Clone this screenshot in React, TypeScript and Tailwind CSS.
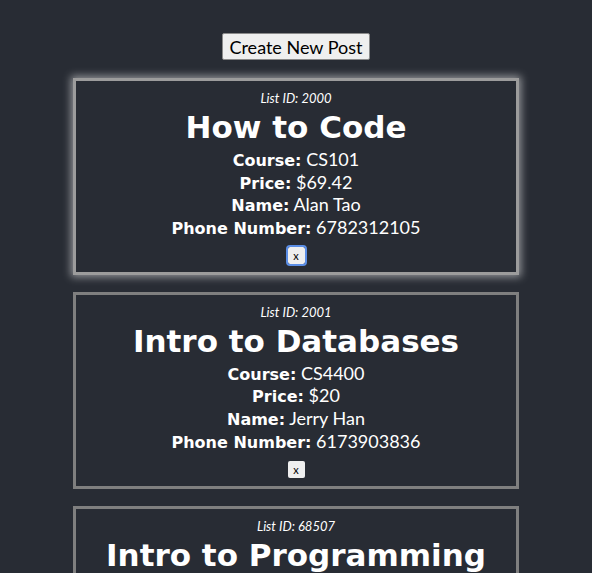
import React from "react";

type Post = { id: number; title: string; course: string; price: string; name: string; phone: string };

const posts: Post[] = [
  { id: 2000, title: "How to Code", course: "CS101", price: "$69.42", name: "Alan Tao", phone: "6782312105" },
  { id: 2001, title: "Intro to Databases", course: "CS4400", price: "$20", name: "Jerry Han", phone: "6173903836" },
  { id: 68507, title: "Intro to Programming", course: "CS1301", price: "$15", name: "Jane Doe", phone: "4045551234" },
];

const boldFont = "font-['DejaVu_Sans',sans-serif] font-bold";

function Field({ label, value }: { label: string; value: string }) {
  return (
    <div className="h-[22.7px] leading-[22.7px]">
      <span className={boldFont + " text-[16px] leading-none"}>{label}</span> {value}
    </div>
  );
}

function Card({ p, active }: { p: Post; active?: boolean }) {
  return (
    <div
      className={
        "w-[446px] mx-auto border-[3px] flex flex-col items-center pt-[9px] pb-[8px] " +
        (active
          ? "border-[#9c9c9c] shadow-[0_0_8px_2px_rgba(255,255,255,0.5)]"
          : "border-[#7f7f7f]")
      }
    >
      <div className="text-[13px] leading-[16px] italic">List ID: {p.id}</div>
      <div className={boldFont + " text-[31px] leading-[40px] mt-[1px]"}>{p.title}</div>
      <div className="text-[18px] leading-[22.7px] mt-[1px] flex flex-col items-center">
        <Field label="Course:" value={p.course} />
        <Field label="Price:" value={p.price} />
        <Field label="Name:" value={p.name} />
        <Field label="Phone Number:" value={p.phone} />
      </div>
      <button
        className={
          "mt-[8px] w-[17px] h-[17px] bg-[#efefef] text-black text-[11px] leading-none flex items-center justify-center rounded-[2px] " +
          (active ? "outline-2 outline-[#5b8ee6] outline-offset-0" : "")
        }
      >
        x
      </button>
    </div>
  );
}

export default function App() {
  return (
    <div
      className="min-h-[573px] bg-[#282c34] text-white flex flex-col items-center pt-[33px] gap-[18px]"
      style={{ fontFamily: "Lato, 'Open Sans', sans-serif" }}
    >
      <button className="h-[27px] px-[6px] bg-[#efefef] text-black text-[18px] leading-none border border-[#8a8a8a] rounded-[2px]">
        Create New Post
      </button>
      <div className="w-full flex flex-col gap-[17px]">
        {posts.map((p, i) => (
          <Card key={p.id} p={p} active={i === 0} />
        ))}
      </div>
    </div>
  );
}
